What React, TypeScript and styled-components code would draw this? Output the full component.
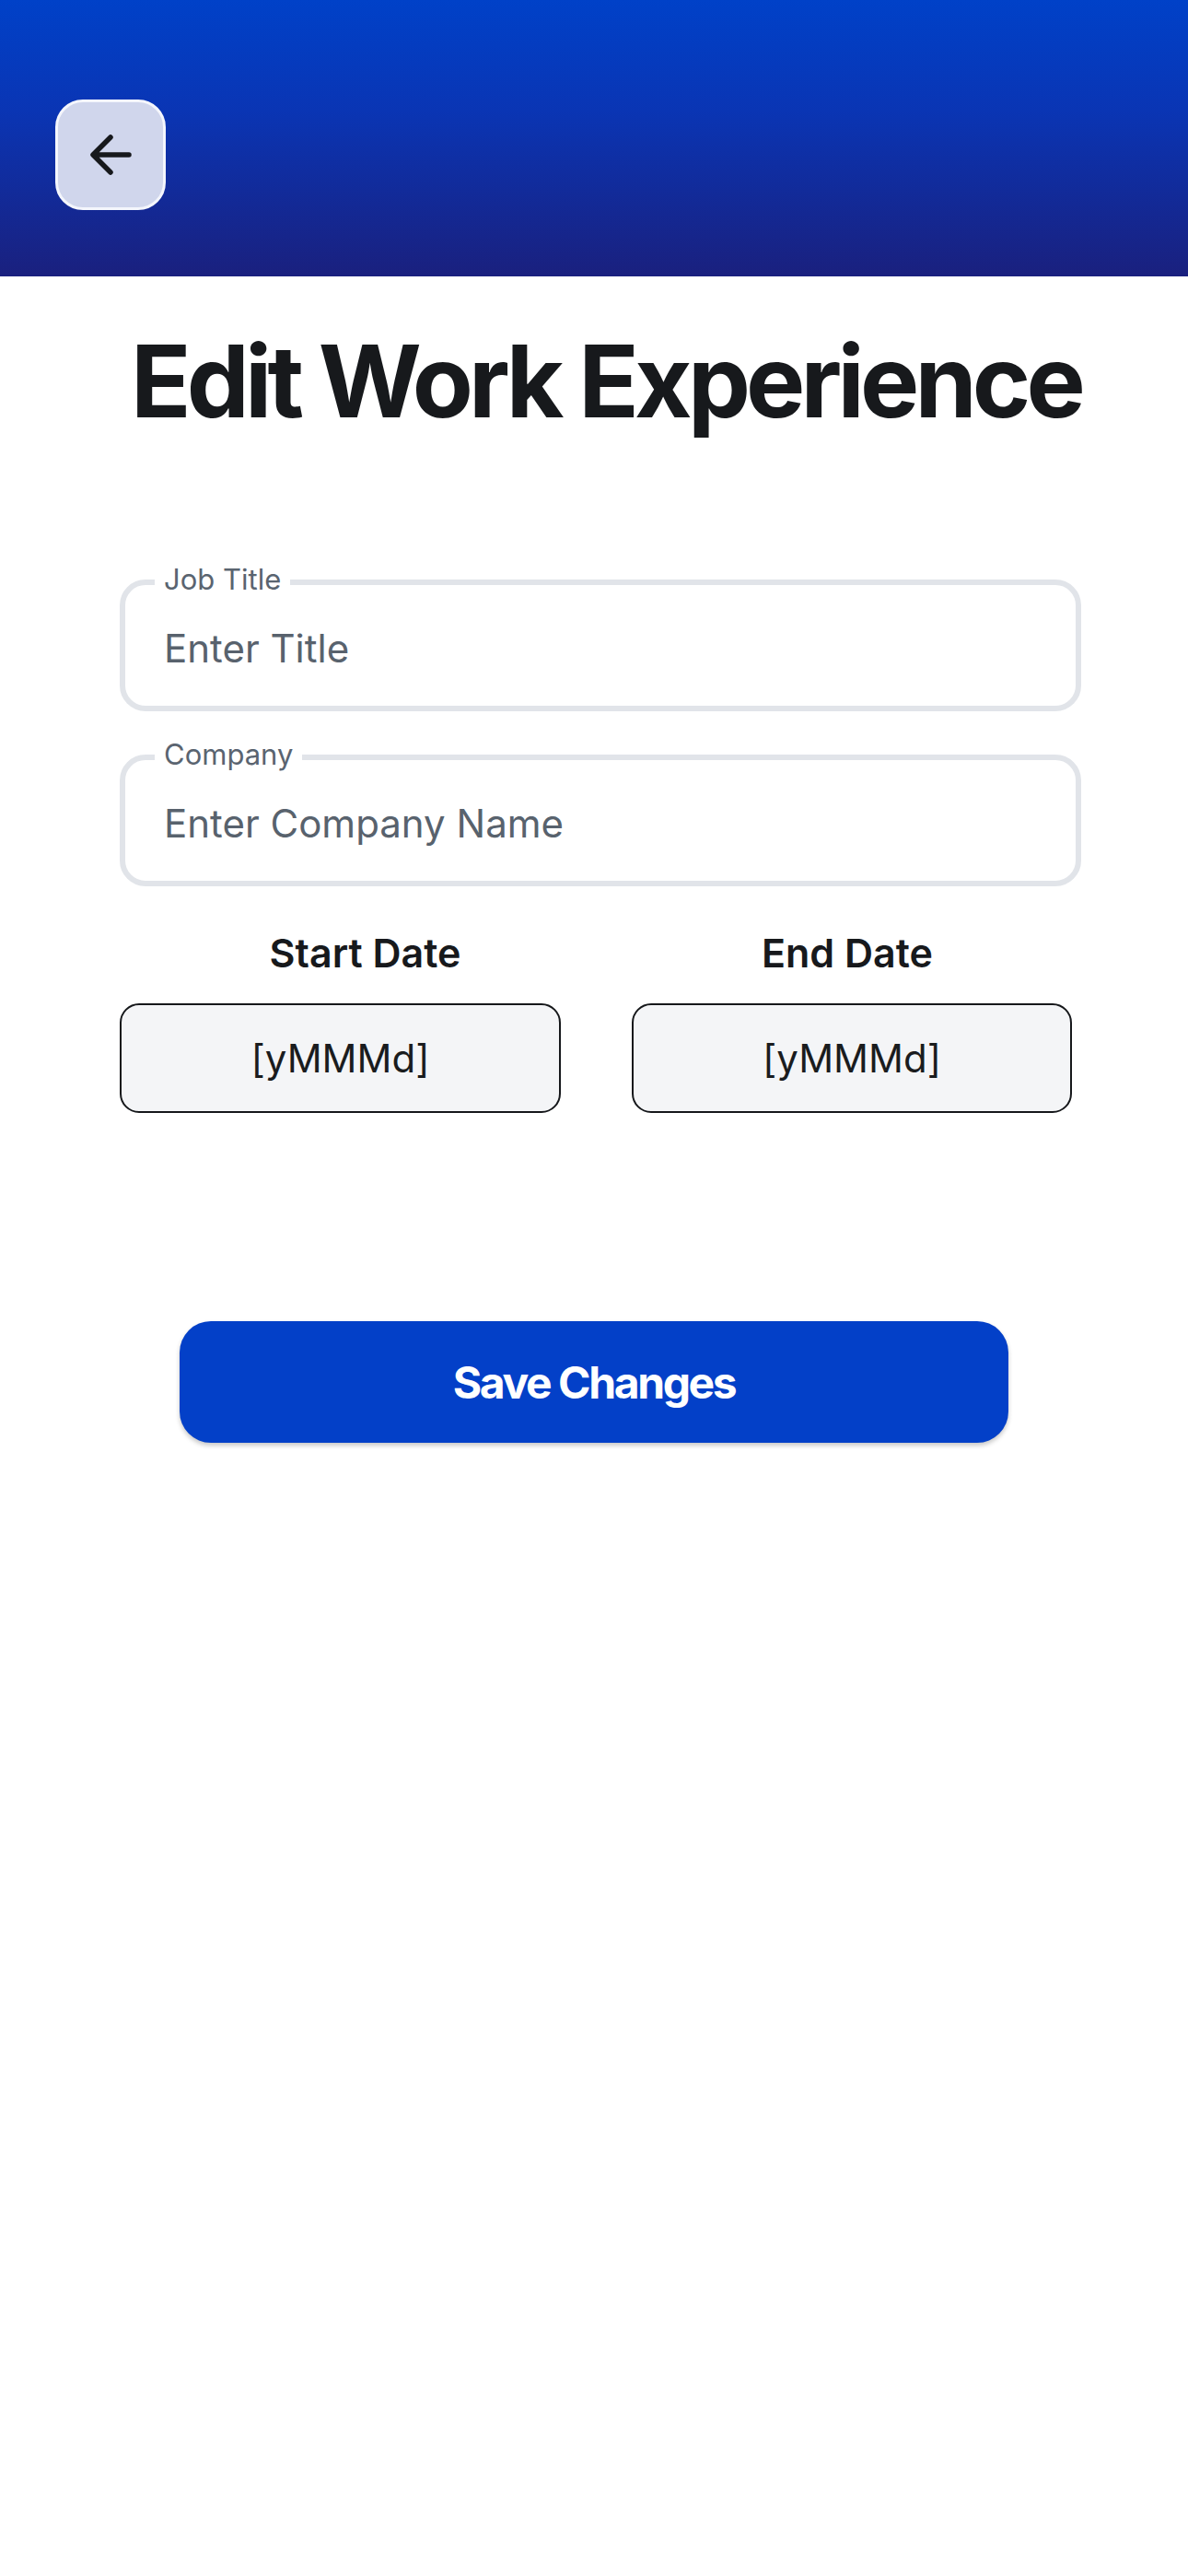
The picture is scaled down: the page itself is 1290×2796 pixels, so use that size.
import React from "react";
import styled, { createGlobalStyle } from "styled-components";

const GlobalStyle = createGlobalStyle`
  html, body { margin: 0; padding: 0; background: #ffffff; }
  body { font-family: Inter, "Noto Sans", sans-serif; -webkit-font-smoothing: antialiased; }
  * { box-sizing: border-box; }
`;

const Page = styled.div`
  width: 1290px;
  min-height: 2796px;
  background: #ffffff;
  display: flex;
  flex-direction: column;
`;

const Header = styled.header`
  height: 300px;
  background: linear-gradient(180deg, #0041c8 0%, #0a35b4 40%, #1a207e 100%);
  display: flex;
  align-items: flex-start;
  padding: 108px 0 0 60px;
`;

const BackButton = styled.button`
  width: 120px;
  height: 120px;
  border-radius: 30px;
  border: 3px solid #f4f6fc;
  background: #d0d6ec;
  display: flex;
  align-items: center;
  justify-content: center;
  padding: 0;
  cursor: pointer;
`;

const Title = styled.h1`
  margin: 60px 0 0 0;
  padding-left: 26px;
  font-family: Inter, sans-serif;
  font-weight: 700;
  font-size: 108px;
  line-height: 1;
  letter-spacing: -0.045em;
  color: #17191c;
  text-align: center;
`;

const Form = styled.div`
  margin: 161px 0 0 130px;
  width: 1044px;
  display: flex;
  flex-direction: column;
  gap: 47px;
`;

const Field = styled.label`
  position: relative;
  height: 143px;
  border: 6px solid #e1e4e9;
  border-radius: 28px;
  display: flex;
  align-items: center;
  padding-left: 42px;
  padding-top: 6px;
`;

const FieldLabel = styled.span`
  position: absolute;
  top: -22px;
  left: 32px;
  padding: 0 10px;
  background: #ffffff;
  font-family: Inter, sans-serif;
  font-size: 31px;
  line-height: 1;
  color: #5a6470;
`;

const FieldInput = styled.input`
  border: none;
  outline: none;
  background: transparent;
  width: 100%;
  font-family: Inter, sans-serif;
  font-size: 42px;
  line-height: 1;
  color: #1a1c1e;
  padding: 0;
  &::placeholder { color: #58626d; }
`;

const DateRow = styled.div`
  margin: 51px 0 0 130px;
  width: 1056px;
  display: grid;
  grid-template-columns: 528px 528px;
`;

const DateColumn = styled.div<{ $ml: number; $mr: number }>`
  display: flex;
  flex-direction: column;
  align-items: stretch;
  padding: 0 ${(p) => p.$mr}px 0 ${(p) => p.$ml}px;
`;

const DateLabel = styled.div<{ $shift: number }>`
  font-family: Inter, sans-serif;
  font-weight: 600;
  font-size: 43px;
  line-height: 1;
  color: #17191c;
  text-align: center;
  margin-left: ${(p) => p.$shift}px;
  margin-bottom: 33px;
`;

const DateBox = styled.div`
  height: 119px;
  border: 2px solid #16181b;
  border-radius: 21px;
  background: #f4f5f7;
  display: flex;
  align-items: center;
  justify-content: center;
  font-family: Inter, sans-serif;
  font-size: 42px;
  line-height: 1;
  color: #1a1c1e;
`;

const SaveButton = styled.button`
  margin: 226px 0 0 195px;
  width: 900px;
  height: 132px;
  border: none;
  border-radius: 34px;
  background: #0340c8;
  box-shadow: 0 3px 5px rgba(0, 0, 0, 0.22);
  color: #ffffff;
  font-family: Inter, sans-serif;
  font-weight: 700;
  font-size: 48px;
  letter-spacing: -0.05em;
  cursor: pointer;
`;

const ArrowIcon = () => (
  <svg width="50" height="50" viewBox="0 0 50 50" fill="none">
    <path
      d="M45 25H7M25 6L6 25L25 44"
      stroke="#17191c"
      strokeWidth="5.5"
      strokeLinecap="round"
      strokeLinejoin="round"
    />
  </svg>
);

export default function App() {
  return (
    <>
      <GlobalStyle />
      <Page>
        <Header>
          <BackButton aria-label="Back">
            <ArrowIcon />
          </BackButton>
        </Header>
        <Title>Edit Work Experience</Title>
        <Form>
          <Field>
            <FieldLabel>Job Title</FieldLabel>
            <FieldInput placeholder="Enter Title" />
          </Field>
          <Field>
            <FieldLabel>Company</FieldLabel>
            <FieldInput placeholder="Enter Company Name" />
          </Field>
        </Form>
        <DateRow>
          <DateColumn $ml={0} $mr={49}>
            <DateLabel $shift={54}>Start Date</DateLabel>
            <DateBox>[yMMMd]</DateBox>
          </DateColumn>
          <DateColumn $ml={28} $mr={22}>
            <DateLabel $shift={-10}>End Date</DateLabel>
            <DateBox>[yMMMd]</DateBox>
          </DateColumn>
        </DateRow>
        <SaveButton>Save Changes</SaveButton>
      </Page>
    </>
  );
}
